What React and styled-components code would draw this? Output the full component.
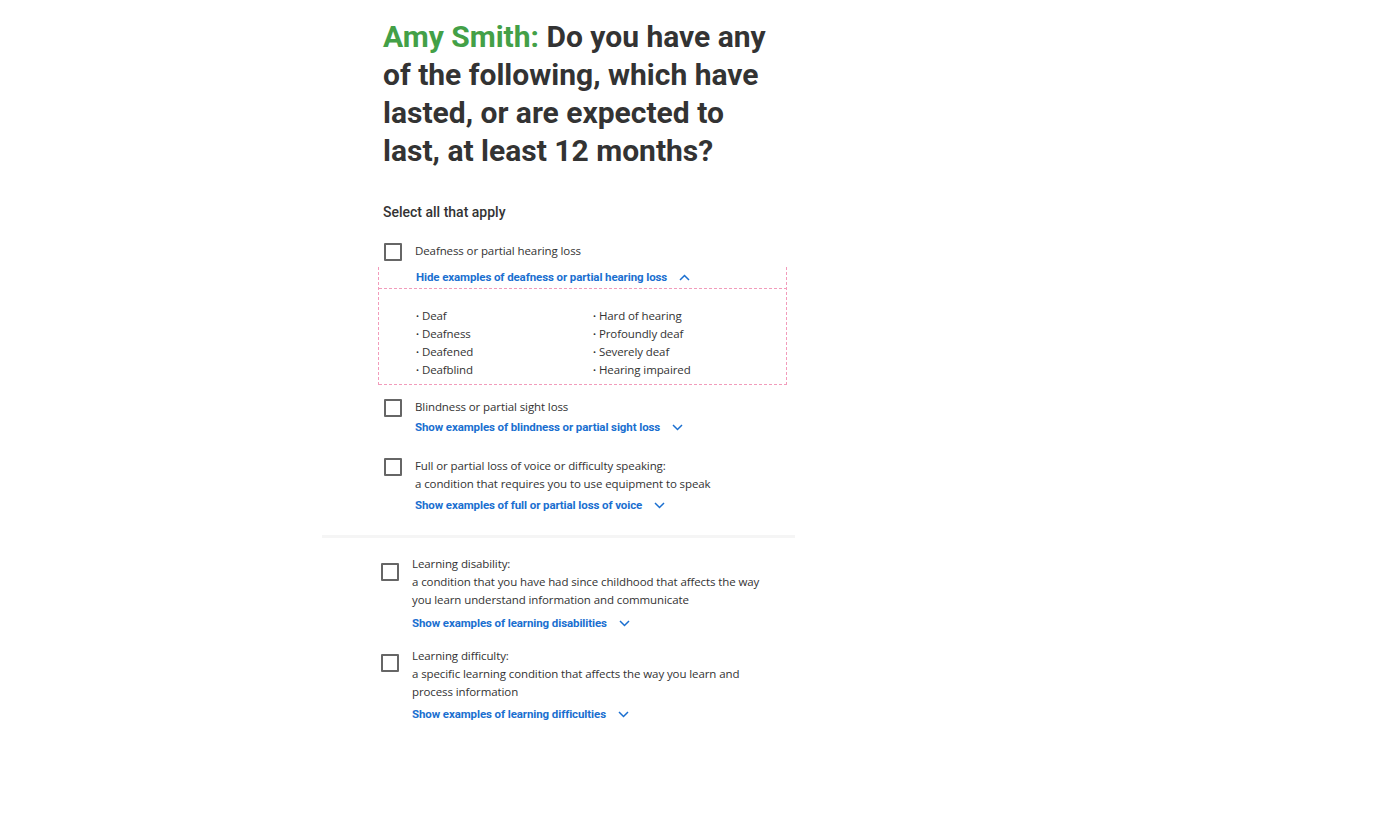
import React from 'react';
import styled, { createGlobalStyle } from 'styled-components';

const GlobalStyle = createGlobalStyle`
  body {
    margin: 0;
    background: #ffffff;
    font-family: Roboto, "Liberation Sans", sans-serif;
    color: #333333;
  }
`;

const Page = styled.div`
  width: 473px;
  margin-left: 322px;
  padding-top: 18px;
`;

const Section = styled.section`
  padding-left: ${(props) => props.indent}px;
  padding-right: 8px;
`;

const Heading = styled.h1`
  margin: 0;
  width: 395px;
  font-family: Roboto, "Liberation Sans", sans-serif;
  font-size: 30px;
  line-height: 38px;
  font-weight: 700;
  color: #333333;
`;

const Name = styled.span`
  color: #43a047;
`;

const Hint = styled.p`
  margin: 33px 0 21px;
  font-size: 14px;
  line-height: 18px;
  font-weight: 500;
  color: #333333;
`;

const Options = styled.div`
  display: flex;
  flex-direction: column;
  gap: ${(props) => props.gap}px;
`;

const Option = styled.div`
  display: flex;
  align-items: flex-start;
  margin-top: ${(props) => props.extra || 0}px;
`;

const Box = styled.span`
  flex: none;
  width: 14px;
  height: 14px;
  margin-top: ${(props) => props.drop || 0}px;
  margin-left: 1px;
  margin-right: 13px;
  border: 2px solid #666666;
  border-radius: 1px;
`;

const Body = styled.div`
  flex: 1;
  min-width: 0;
`;

const Label = styled.div`
  font-family: "Open Sans", "Liberation Sans", sans-serif;
  font-size: 11.5px;
  line-height: 18px;
  color: #333333;
  letter-spacing: -0.1px;
`;

const Toggle = styled.div`
  display: flex;
  align-items: center;
  gap: 12px;
  height: 20px;
  margin-top: ${(props) => props.gapTop}px;
  font-family: Roboto, "Liberation Sans", sans-serif;
  font-size: 11.5px;
  font-weight: 700;
  color: #1a6fd0;
  letter-spacing: -0.1px;
`;

const Expanded = styled.div`
  margin-left: -37px;
  margin-top: 7px;
  padding-left: 37px;
  border-left: 1px dashed #f29bbb;
  border-right: 1px dashed #f29bbb;
`;

const Examples = styled.ul`
  margin: 1px -1px 0 -37px;
  padding: 18px 0 5px 37px;
  list-style: none;
  display: grid;
  grid-template-columns: 177px 1fr;
  grid-auto-flow: column;
  grid-template-rows: repeat(4, 18px);
  border-top: 1px dashed #f29bbb;
  border-bottom: 1px dashed #f29bbb;
  font-family: "Open Sans", "Liberation Sans", sans-serif;
  font-size: 11.5px;
  line-height: 18px;
  color: #333333;
  letter-spacing: -0.1px;

  > li::before {
    content: '•';
    font-size: 8px;
    margin-right: 3px;
    vertical-align: 1px;
  }
`;

const Divider = styled.hr`
  margin: 20px 0 17px;
  height: 3px;
  border: none;
  background: #f5f5f5;
`;

const Chevron = ({ up }) => (
  <svg width="11" height="7" viewBox="0 0 11 7" fill="none">
    <path
      d={up ? 'M1 6L5.5 1.5L10 6' : 'M1 1L5.5 5.5L10 1'}
      stroke="#1a6fd0"
      strokeWidth="1.5"
    />
  </svg>
);

const ShowLink = ({ text, up, gapTop = 0 }) => (
  <Toggle gapTop={gapTop}>
    <span>{text}</span>
    <Chevron up={up} />
  </Toggle>
);

const deafness = [
  'Deaf', 'Deafness', 'Deafened', 'Deafblind',
  'Hard of hearing', 'Profoundly deaf', 'Severely deaf', 'Hearing impaired',
];

export default function App() {
  return (
    <Page>
      <GlobalStyle />
      <Section indent={61}>
        <Heading>
          <Name>Amy Smith:</Name> Do you have any of the following, which have
          lasted, or are expected to last, at least 12 months?
        </Heading>
        <Hint>Select all that apply</Hint>
        <Options gap={13}>
          <Option>
            <Box drop={1} />
            <Body>
              <Label>Deafness or partial hearing loss</Label>
              <Expanded>
                <ShowLink text="Hide examples of deafness or partial hearing loss" up />
                <Examples>
                  {deafness.map((item) => (
                    <li key={item}>{item}</li>
                  ))}
                </Examples>
              </Expanded>
            </Body>
          </Option>
          <Option>
            <Box drop={1} />
            <Body>
              <Label>Blindness or partial sight loss</Label>
              <ShowLink text="Show examples of blindness or partial sight loss" gapTop={1} />
            </Body>
          </Option>
          <Option extra={7}>
            <Box drop={1} />
            <Body>
              <Label>
                Full or partial loss of voice or difficulty speaking:
                <br />a condition that requires you to use equipment to speak
              </Label>
              <ShowLink text="Show examples of full or partial loss of voice" gapTop={2} />
            </Body>
          </Option>
        </Options>
      </Section>
      <Divider />
      <Section indent={58}>
        <Options gap={14}>
          <Option>
            <Box drop={8} />
            <Body>
              <Label>
                Learning disability:
                <br />a condition that you have had since childhood that affects the way
                <br />you learn understand information and communicate
              </Label>
              <ShowLink text="Show examples of learning disabilities" gapTop={4} />
            </Body>
          </Option>
          <Option>
            <Box drop={7} />
            <Body>
              <Label>
                Learning difficulty:
                <br />a specific learning condition that affects the way you learn and
                <br />process information
              </Label>
              <ShowLink text="Show examples of learning difficulties" gapTop={3} />
            </Body>
          </Option>
        </Options>
      </Section>
    </Page>
  );
}
